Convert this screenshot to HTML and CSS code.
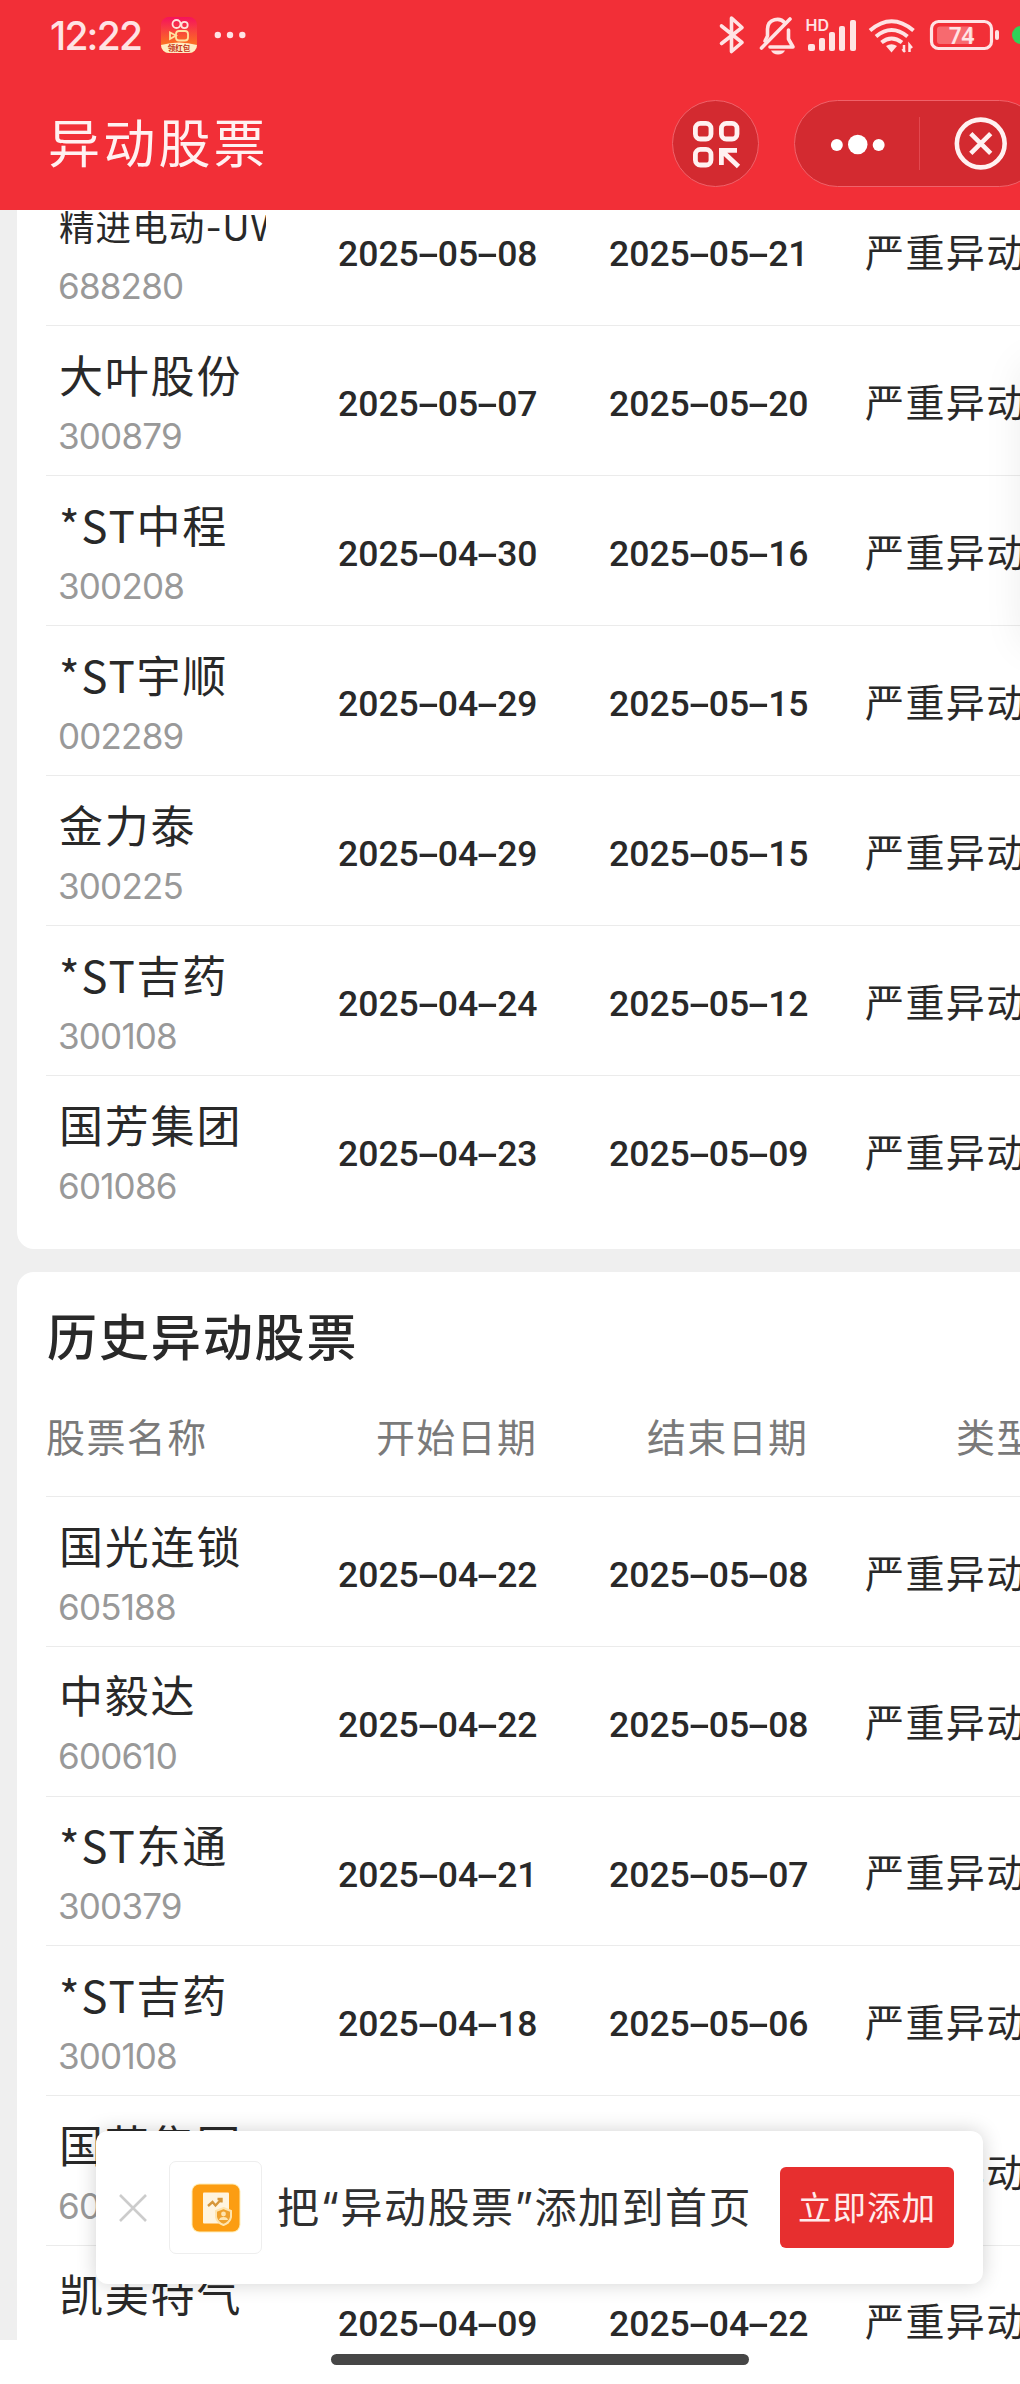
FILE: index.html
```html
<!DOCTYPE html>
<html lang="zh-CN">
<head>
<meta charset="utf-8">
<title>异动股票</title>
<link rel="stylesheet" href="styles.css">
</head>
<body>
<div class="screen">
  <header class="topbar">
    <div class="status">
      <span class="clock">12:22</span>
      <svg class="app-badge" width="36" height="36" viewBox="0 0 36 36">
        <defs>
          <linearGradient id="badge" x1="0" y1="0" x2="0" y2="1"><stop offset="0" stop-color="#f5125c"/><stop offset=".7" stop-color="#fb6a25"/><stop offset="1" stop-color="#fb8a35"/></linearGradient>
          <clipPath id="badge-clip"><rect width="36" height="36" rx="8"/></clipPath>
        </defs>
        <g clip-path="url(#badge-clip)">
          <rect width="36" height="36" fill="url(#badge)"/>
          <path d="M0 28Q18 23 36 28V36H0Z" fill="#ffedc4"/>
        </g>
        <g fill="none" stroke="#ffe4dc" stroke-width="1.8">
          <circle cx="15.5" cy="7" r="4"/><circle cx="23.5" cy="8" r="3.2"/>
          <rect x="15" y="14" width="12" height="9.5" rx="3" stroke="#ffe2a0"/><path d="M15 18.5L9 15.5V22Z" stroke="#ffe2a0"/>
        </g>
        <text x="18" y="34.3" text-anchor="middle" class="badge-text">领红包</text>
      </svg>
      <svg class="more" width="32" height="8" viewBox="0 0 32 8" fill="#ffe3e4"><circle cx="3.8" cy="4" r="3.2"/><circle cx="16" cy="4" r="3.2"/><circle cx="28.3" cy="4" r="3.2"/></svg>
      <svg class="indicators" width="310" height="70" viewBox="710 0 310 70">
        <g fill="none" stroke="#ffe3e4" stroke-linecap="round" stroke-linejoin="round" stroke-width="3.6">
          <path d="M721.500 26L742 42.500L731.500 51.500V18L742 27.500L721.500 43.500"/>
          <path d="M785 23C780 17 768 18.500 767.500 29V36L765 41M770 47H793L788.500 39V30"/>
          <path d="M761.500 48L790 19"/>
        </g>
        <path d="M771 50.500H785Q783 54.500 778 54.500T771 50.500Z" fill="#ffe3e4"/>
        <g fill="#ffe3e4">
          <text x="805.500" y="31" class="hd">HD</text>
          <rect x="808" y="44" width="7" height="7" rx="2"/><rect x="819" y="38" width="6" height="13" rx="2"/><rect x="829" y="32" width="6" height="19" rx="2"/><rect x="839" y="26" width="6" height="25" rx="2"/><rect x="850" y="20" width="6" height="31" rx="2"/>
          <path d="M886 46Q891.500 42.500 897 46L891.500 52.500Z"/>
        </g>
        <g fill="none" stroke="#ffe3e4" stroke-width="4">
          <path d="M870 30.500Q891.500 12 913.500 30.500"/><path d="M876 36.500Q891.500 23.500 907.500 36.500"/><path d="M881.500 42.500Q891.500 34.500 902 42.500"/>
        </g>
        <path d="M904 45V52M902.500 49L905 52M909.500 52V45L912 48" fill="none" stroke="#ffe3e4" stroke-width="2.500"/>
        <rect x="931.500" y="21.500" width="60" height="27" rx="7" fill="none" stroke="#ffe3e4" stroke-width="3.200"/>
        <rect x="937" y="26.500" width="36" height="17.500" rx="3" fill="#f76a6f"/>
        <rect x="995" y="30" width="4" height="10" rx="2" fill="#ffe3e4"/>
        <text x="961.500" y="44" text-anchor="middle" class="charge">74</text>
        <circle cx="1021" cy="35" r="9" fill="#31d158"/>
      </svg>
    </div>
    <div class="titlebar">
      <h1>异动股票</h1>
      <div class="round-btn">
        <svg width="50" height="50" viewBox="0 0 50 50" fill="none" stroke="#fff1f1" stroke-width="4.800">
          <rect x="4.400" y="4.400" width="15.600" height="15.600" rx="5"/><rect x="30.400" y="4.400" width="15.600" height="15.600" rx="5"/><rect x="4.400" y="30.400" width="15.600" height="15.600" rx="5"/>
          <path d="M30.400 46V31.400H46M31 32L47.500 47.500"/>
        </svg>
      </div>
      <div class="capsule">
        <svg class="dots" width="124" height="86" viewBox="0 0 124 86" fill="#fff"><circle cx="42" cy="44" r="6"/><circle cx="63" cy="43.500" r="9.800"/><circle cx="84" cy="44" r="6"/></svg>
        <i class="divider"></i>
        <svg width="123" height="86" viewBox="0 0 123 86" fill="none" stroke="#fff1f1" stroke-width="4.600"><circle cx="61" cy="42.500" r="24"/><path d="M51 32.500L71 52.500M71 32.500L51 52.500"/></svg>
      </div>
    </div>
  </header>

  <main class="feed">
    <section class="card current">
      <div class="row"><div class="stock"><b class="small">精进电动-UW</b><span>688280</span></div><time>2025<i>-</i>05<i>-</i>08</time><time>2025<i>-</i>05<i>-</i>21</time><em>严重异动</em></div>
      <div class="row"><div class="stock"><b>大叶股份</b><span>300879</span></div><time>2025<i>-</i>05<i>-</i>07</time><time>2025<i>-</i>05<i>-</i>20</time><em>严重异动</em></div>
      <div class="row"><div class="stock"><b>*ST中程</b><span>300208</span></div><time>2025<i>-</i>04<i>-</i>30</time><time>2025<i>-</i>05<i>-</i>16</time><em>严重异动</em></div>
      <div class="row"><div class="stock"><b>*ST宇顺</b><span>002289</span></div><time>2025<i>-</i>04<i>-</i>29</time><time>2025<i>-</i>05<i>-</i>15</time><em>严重异动</em></div>
      <div class="row"><div class="stock"><b>金力泰</b><span>300225</span></div><time>2025<i>-</i>04<i>-</i>29</time><time>2025<i>-</i>05<i>-</i>15</time><em>严重异动</em></div>
      <div class="row"><div class="stock"><b>*ST吉药</b><span>300108</span></div><time>2025<i>-</i>04<i>-</i>24</time><time>2025<i>-</i>05<i>-</i>12</time><em>严重异动</em></div>
      <div class="row"><div class="stock"><b>国芳集团</b><span>601086</span></div><time>2025<i>-</i>04<i>-</i>23</time><time>2025<i>-</i>05<i>-</i>09</time><em>严重异动</em></div>
    </section>
    <section class="card history">
      <h2>历史异动股票</h2>
      <div class="head"><span>股票名称</span><span>开始日期</span><span>结束日期</span><span class="kind">类型</span></div>
      <div class="row"><div class="stock"><b>国光连锁</b><span>605188</span></div><time>2025<i>-</i>04<i>-</i>22</time><time>2025<i>-</i>05<i>-</i>08</time><em>严重异动</em></div>
      <div class="row"><div class="stock"><b>中毅达</b><span>600610</span></div><time>2025<i>-</i>04<i>-</i>22</time><time>2025<i>-</i>05<i>-</i>08</time><em>严重异动</em></div>
      <div class="row"><div class="stock"><b>*ST东通</b><span>300379</span></div><time>2025<i>-</i>04<i>-</i>21</time><time>2025<i>-</i>05<i>-</i>07</time><em>严重异动</em></div>
      <div class="row"><div class="stock"><b>*ST吉药</b><span>300108</span></div><time>2025<i>-</i>04<i>-</i>18</time><time>2025<i>-</i>05<i>-</i>06</time><em>严重异动</em></div>
      <div class="row"><div class="stock"><b>国芳集团</b><span>601086</span></div><time></time><time></time><em>严重异动</em></div>
      <div class="row"><div class="stock"><b>凯美特气</b></div><time>2025<i>-</i>04<i>-</i>09</time><time>2025<i>-</i>04<i>-</i>22</time><em>严重异动</em></div>
    </section>
    <div class="edge-panel"></div>
  </main>

  <aside class="prompt">
    <svg class="dismiss" width="28" height="28" viewBox="0 0 28 28" fill="none" stroke="#ccc" stroke-width="2.600"><path d="M1 1L27 27M27 1L1 27"/></svg>
    <div class="thumb">
      <svg width="52" height="52" viewBox="0 0 52 52">
        <rect x="1.500" y="1.500" width="49" height="49" rx="8" fill="#ffeeb8"/>
        <rect x="2.500" y="2.500" width="47" height="47" rx="7" fill="#fc9d12"/>
        <rect x="13" y="10.500" width="26" height="31" rx="1" fill="#fff4df"/>
        <path d="M18 24L22.500 20L25.500 23.500L31 17.500M27.500 17H31.500V20.500" fill="none" stroke="#d6963a" stroke-width="2.400"/>
        <path d="M33.500 26L41 29V35Q40 40.500 33.500 43Q27 40.500 26 35V29Z" fill="#efa12d" stroke="#ffe4ad" stroke-width="2"/>
        <circle cx="33.500" cy="32" r="2.400" fill="#ffe4ad"/><path d="M29 38Q29.500 35 33.500 35T38 38Z" fill="#ffe4ad"/>
      </svg>
    </div>
    <p>把“异动股票”添加到首页</p>
    <button type="button">立即添加</button>
  </aside>
  <footer class="nav"><i></i></footer>
</div>
</body>
</html>
```
FILE: styles.css
```css
* { box-sizing: border-box; }
body { margin: 0; background: #fff; }
i, em { font-style: normal; }
h1, h2, p { margin: 0; font-weight: 400; white-space: nowrap; }

.screen {
  position: relative;
  display: flex;
  flex-direction: column;
  width: 1020px;
  height: 2384px;
  overflow: hidden;
  color: #292929;
  font-family: Inter, "Noto Sans CJK SC", sans-serif;
}

/* Status line and title */
.topbar { flex: none; height: 210px; overflow: hidden; background: #f22f37; }
.status { display: flex; align-items: center; height: 70px; padding-left: 50px; }
.clock { flex: none; width: 111px; color: #ffe3e4; font-size: 39px; font-weight: 500; letter-spacing: -1.800px; }
.more { margin-left: 17px; }
.app-badge, .more { flex: none; }
.indicators { flex: none; margin-left: auto; }
.badge-text { fill: #c3351b; font: 700 7.500px "Noto Sans CJK SC", sans-serif; }
.hd { font: 600 16px Inter, sans-serif; }
.charge { fill: #ffe3e4; font: 600 22.500px "Noto Sans", sans-serif; }
.titlebar { display: flex; height: 147px; padding: 30px 0 0 48px; }
.titlebar h1 { flex: none; width: 624px; padding-top: 2px; color: #fff1f1; font-size: 52px; line-height: 86px; letter-spacing: 3.200px; }
.round-btn, .capsule {
  display: flex;
  flex: none;
  height: 87px;
  border: 1px solid #f0626a;
  border-radius: 44px;
  background: #d32a30;
}
.round-btn { align-items: center; justify-content: center; width: 87px; }
.capsule { align-items: center; width: 249px; margin-left: 35px; }
.divider { flex: none; width: 1px; height: 53px; background: #e3484f; }

/* Stock lists */
.feed { position: relative; flex: 1; min-height: 0; overflow: hidden; background: #efefef; }
.card { width: 1100px; margin-left: 17px; padding-left: 29px; border-radius: 17px; background: #fff; }
.current { margin-top: -34px; padding-bottom: 23px; }
.history { margin-top: 23px; }
.row, .head { display: grid; grid-template-columns: 220px 271.500px 271px 294px; }
.row { height: 150px; border-bottom: 1px solid #ebebeb; }
.row:last-child { border-bottom: 0; }
.stock { padding: 21px 0 0 13px; overflow: hidden; white-space: nowrap; }
.stock b { display: block; height: 60px; font-family: "Noto Sans CJK SC", sans-serif; font-size: 44px; font-weight: 400; line-height: 54px; letter-spacing: 1.800px; }
.stock b.small { font-family: Inter, "Noto Sans CJK SC", sans-serif; font-size: 35.500px; letter-spacing: 1.100px; line-height: 63px; }
.stock span { display: block; margin-left: -1px; color: #999; font-size: 35px; line-height: 58.500px; letter-spacing: -0.800px; }
.row time { font: 500 35.500px/40px Roboto, sans-serif; padding-top: 58px; text-align: right; white-space: nowrap; }
.row time i { display: inline-block; width: 19px; text-align: center; transform: scaleX(1.900); }
.row em { padding: 47px 0 0 56.500px; font-size: 39px; line-height: 60px; letter-spacing: 1.400px; white-space: nowrap; }
.history .row { height: 149.800px; }
.history .stock { padding-top: 20.500px; }
.history time { padding-top: 58px; }
.history em { padding-top: 46.500px; }
.history h2 { height: 136px; padding: 26px 0 0 1px; font-size: 50px; font-weight: 500; line-height: 80px; letter-spacing: 1.900px; }
.head { height: 89px; border-bottom: 1px solid #ebebeb; color: #7a7a7a; font-size: 39px; line-height: 60px; letter-spacing: 1.400px; }
.head span { text-align: right; white-space: nowrap; }
.head span:first-child { text-align: left; }
.head .kind { padding-left: 147.500px; text-align: left; }
.edge-panel { position: absolute; top: 155px; left: 1022px; width: 80px; height: 280px; box-shadow: 0 0 40px rgba(0, 0, 0, .08); }

/* Add-to-home prompt */
.prompt {
  position: absolute;
  top: 2131px;
  left: 96px;
  display: flex;
  align-items: center;
  width: 887px;
  height: 153px;
  padding: 0 29px 0 23px;
  border-radius: 12px;
  background: #fff;
  box-shadow: 0 0 20px rgba(0, 0, 0, .18);
}
.dismiss { flex: none; }
.thumb { display: flex; flex: none; align-items: center; justify-content: center; width: 93px; height: 93px; margin-left: 22px; border: 1px solid #eee; border-radius: 7px; }
.prompt p { margin-left: 15px; padding-bottom: 7px; color: #303030; font-size: 42px; letter-spacing: 1.500px; }
.prompt button { width: 174px; height: 81px; margin-left: auto; padding: 0 0 4px; border: 0; border-radius: 6px; background: #e72f2f; color: #ffecec; font: 400 33.500px "Noto Sans CJK SC", sans-serif; letter-spacing: 1px; }

.nav { display: flex; flex: none; justify-content: center; height: 44px; padding: 14px 0 0 60px; background: #fff; }
.nav i { width: 418px; height: 11px; border-radius: 6px; background: #464646; }
```
